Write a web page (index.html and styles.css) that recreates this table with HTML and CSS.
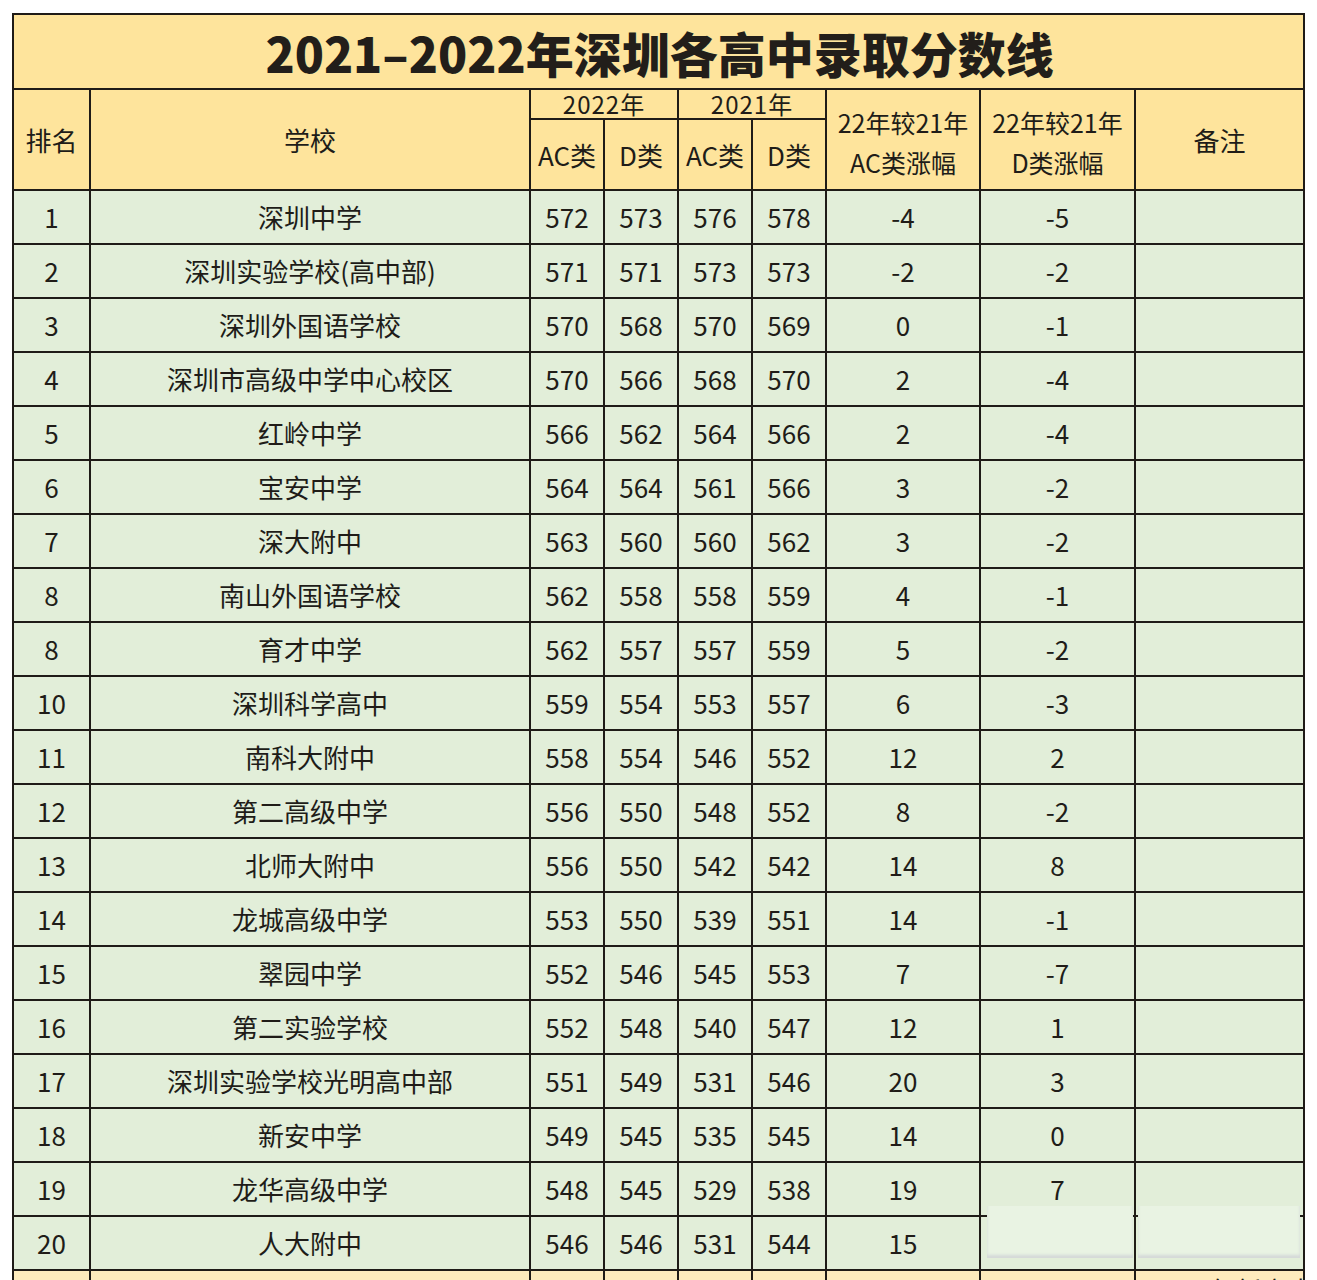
FILE: index.html
```html
<!DOCTYPE html>
<html lang="zh-CN">
<head>
<meta charset="utf-8">
<title>2021-2022年深圳各高中录取分数线</title>
<link rel="stylesheet" href="styles.css">
</head>
<body>
<div class="page">
<table class="score">
<colgroup>
<col class="c-rank"><col class="c-school"><col class="c-num"><col class="c-num"><col class="c-num"><col class="c-num"><col class="c-diff"><col class="c-diff2"><col class="c-note">
</colgroup>
<thead>
<tr class="title-row"><th colspan="9" class="title">2021–2022年深圳各高中录取分数线</th></tr>
<tr class="year-row">
<th rowspan="2">排名</th>
<th rowspan="2">学校</th>
<th colspan="2" class="year">2022年</th>
<th colspan="2" class="year">2021年</th>
<th rowspan="2" class="two">22年较21年<br>AC类涨幅</th>
<th rowspan="2" class="two">22年较21年<br>D类涨幅</th>
<th rowspan="2">备注</th>
</tr>
<tr class="type-row">
<th>AC类</th><th>D类</th><th>AC类</th><th>D类</th>
</tr>
</thead>
<tbody>
<tr><td>1</td><td>深圳中学</td><td>572</td><td>573</td><td>576</td><td>578</td><td>-4</td><td>-5</td><td></td></tr>
<tr><td>2</td><td>深圳实验学校(高中部)</td><td>571</td><td>571</td><td>573</td><td>573</td><td>-2</td><td>-2</td><td></td></tr>
<tr><td>3</td><td>深圳外国语学校</td><td>570</td><td>568</td><td>570</td><td>569</td><td>0</td><td>-1</td><td></td></tr>
<tr><td>4</td><td>深圳市高级中学中心校区</td><td>570</td><td>566</td><td>568</td><td>570</td><td>2</td><td>-4</td><td></td></tr>
<tr><td>5</td><td>红岭中学</td><td>566</td><td>562</td><td>564</td><td>566</td><td>2</td><td>-4</td><td></td></tr>
<tr><td>6</td><td>宝安中学</td><td>564</td><td>564</td><td>561</td><td>566</td><td>3</td><td>-2</td><td></td></tr>
<tr><td>7</td><td>深大附中</td><td>563</td><td>560</td><td>560</td><td>562</td><td>3</td><td>-2</td><td></td></tr>
<tr><td>8</td><td>南山外国语学校</td><td>562</td><td>558</td><td>558</td><td>559</td><td>4</td><td>-1</td><td></td></tr>
<tr><td>8</td><td>育才中学</td><td>562</td><td>557</td><td>557</td><td>559</td><td>5</td><td>-2</td><td></td></tr>
<tr><td>10</td><td>深圳科学高中</td><td>559</td><td>554</td><td>553</td><td>557</td><td>6</td><td>-3</td><td></td></tr>
<tr><td>11</td><td>南科大附中</td><td>558</td><td>554</td><td>546</td><td>552</td><td>12</td><td>2</td><td></td></tr>
<tr><td>12</td><td>第二高级中学</td><td>556</td><td>550</td><td>548</td><td>552</td><td>8</td><td>-2</td><td></td></tr>
<tr><td>13</td><td>北师大附中</td><td>556</td><td>550</td><td>542</td><td>542</td><td>14</td><td>8</td><td></td></tr>
<tr><td>14</td><td>龙城高级中学</td><td>553</td><td>550</td><td>539</td><td>551</td><td>14</td><td>-1</td><td></td></tr>
<tr><td>15</td><td>翠园中学</td><td>552</td><td>546</td><td>545</td><td>553</td><td>7</td><td>-7</td><td></td></tr>
<tr><td>16</td><td>第二实验学校</td><td>552</td><td>548</td><td>540</td><td>547</td><td>12</td><td>1</td><td></td></tr>
<tr><td>17</td><td>深圳实验学校光明高中部</td><td>551</td><td>549</td><td>531</td><td>546</td><td>20</td><td>3</td><td></td></tr>
<tr><td>18</td><td>新安中学</td><td>549</td><td>545</td><td>535</td><td>545</td><td>14</td><td>0</td><td></td></tr>
<tr><td>19</td><td>龙华高级中学</td><td>548</td><td>545</td><td>529</td><td>538</td><td>19</td><td>7</td><td></td></tr>
<tr><td>20</td><td>人大附中</td><td>546</td><td>546</td><td>531</td><td>544</td><td>15</td><td></td><td></td></tr>
<tr class="extra"><td></td><td></td><td></td><td></td><td></td><td></td><td></td><td></td><td class="note">2021年新高中</td></tr>
</tbody>
</table>
<div class="mask mask-a"></div>
<div class="mask mask-b"></div>
</div>
</body>
</html>
```
FILE: styles.css
```css
html, body {
  margin: 0;
  padding: 0;
  background: #ffffff;
}
.page {
  position: relative;
  padding: 13px 0 0 12px;
  height: 1267px;
  overflow: hidden;
}
.score {
  border-collapse: collapse;
  table-layout: fixed;
  width: 1293px;
  font-family: "Noto Sans CJK SC", "Noto Sans", sans-serif;
  color: #201c18;
}
.c-rank { width: 77px; }
.c-school { width: 440px; }
.c-num { width: 74px; }
.c-diff { width: 154px; }
.c-diff2 { width: 155px; }
.c-note { width: 169px; }
.score th, .score td {
  border: 2px solid #1f1b17;
  padding: 0;
  text-align: center;
  vertical-align: middle;
  font-size: 26px;
  font-weight: 400;
  line-height: 1;
  white-space: nowrap;
}
.score thead th {
  background: #fee49c;
}
.title-row { height: 75px; }
.score th.title {
  font-size: 48px;
  font-weight: 900;
  padding-left: 2px;
  color: #221e1a;
}
.year-row { height: 30px; }
.score th.year {
  font-size: 24px;
  line-height: 26px;
  vertical-align: bottom;
  padding-bottom: 1px;
  letter-spacing: 1px;
}
.type-row { height: 71px; }
.score th.two {
  line-height: 40px;
  font-size: 25px;
  padding-top: 4px;
}
.score tbody tr { height: 54px; }
.score tbody td {
  background: #e2eed9;
}
.score tbody tr.extra { height: 60px; }
.score tbody tr.extra td {
  background: #fdebbd;
  vertical-align: top;
  padding-top: 6px;
}
.score td.note {
  text-align: left;
  padding-left: 16px;
}
.mask {
  position: absolute;
  top: 1206px;
  height: 52px;
  background: #e9f3e3;
  box-shadow: inset 0 -3px 3px rgba(200, 200, 210, 0.6);
}
.mask-a {
  left: 987px;
  width: 146px;
}
.mask-b {
  left: 1138px;
  width: 162px;
}
```
